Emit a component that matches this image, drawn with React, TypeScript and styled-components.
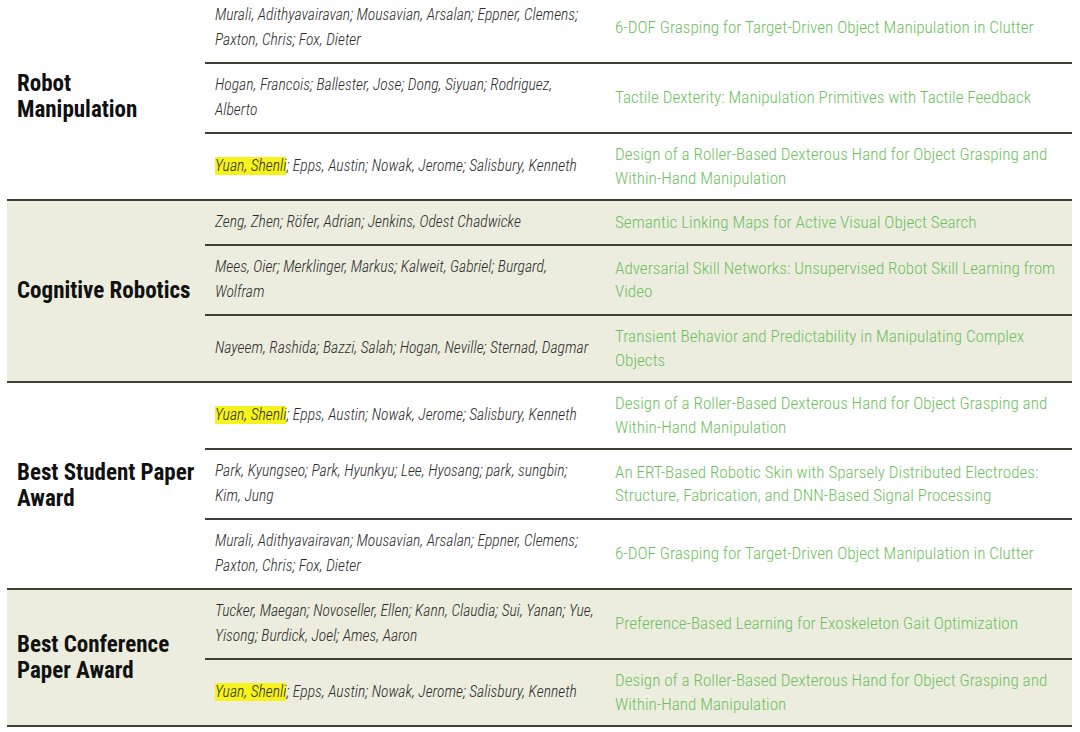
import React from "react";
import styled, { createGlobalStyle } from "styled-components";

const Global = createGlobalStyle`
  html, body { margin: 0; padding: 0; background: #ffffff; }
  body { font-family: "Roboto Condensed", Roboto, "Liberation Sans", sans-serif; overflow: hidden; }
`;

type Paper = { highlight?: string; authors: string; title: string };
type Group = { category: string[]; shaded: boolean; papers: Paper[] };

const yuan: Paper = {
  highlight: "Yuan, Shenli",
  authors: "; Epps, Austin; Nowak, Jerome; Salisbury, Kenneth",
  title: "Design of a Roller-Based Dexterous Hand for Object Grasping and Within-Hand Manipulation",
};
const murali: Paper = {
  authors: "Murali, Adithyavairavan; Mousavian, Arsalan; Eppner, Clemens;\nPaxton, Chris; Fox, Dieter",
  title: "6-DOF Grasping for Target-Driven Object Manipulation in Clutter",
};

const groups: Group[] = [
  {
    category: ["Robot", "Manipulation"],
    shaded: false,
    papers: [
      murali,
      {
        authors: "Hogan, Francois; Ballester, Jose; Dong, Siyuan; Rodriguez,\nAlberto",
        title: "Tactile Dexterity: Manipulation Primitives with Tactile Feedback",
      },
      yuan,
    ],
  },
  {
    category: ["Cognitive Robotics"],
    shaded: true,
    papers: [
      {
        authors: "Zeng, Zhen; Röfer, Adrian; Jenkins, Odest Chadwicke",
        title: "Semantic Linking Maps for Active Visual Object Search",
      },
      {
        authors: "Mees, Oier; Merklinger, Markus; Kalweit, Gabriel; Burgard,\nWolfram",
        title: "Adversarial Skill Networks: Unsupervised Robot Skill Learning from Video",
      },
      {
        authors: "Nayeem, Rashida; Bazzi, Salah; Hogan, Neville; Sternad, Dagmar",
        title: "Transient Behavior and Predictability in Manipulating Complex Objects",
      },
    ],
  },
  {
    category: ["Best Student Paper", "Award"],
    shaded: false,
    papers: [
      yuan,
      {
        authors: "Park, Kyungseo; Park, Hyunkyu; Lee, Hyosang; park, sungbin;\nKim, Jung",
        title:
          "An ERT-Based Robotic Skin with Sparsely Distributed Electrodes: Structure, Fabrication, and DNN-Based Signal Processing",
      },
      murali,
    ],
  },
  {
    category: ["Best Conference", "Paper Award"],
    shaded: true,
    papers: [
      {
        authors: "Tucker, Maegan; Novoseller, Ellen; Kann, Claudia; Sui, Yanan; Yue,\nYisong; Burdick, Joel; Ames, Aaron",
        title: "Preference-Based Learning for Exoskeleton Gait Optimization",
      },
      yuan,
    ],
  },
];

const Table = styled.div`
  margin: -6px 0 0 7px;
  width: 1065px;
`;

const GroupBlock = styled.section<{ $shaded: boolean }>`
  display: grid;
  grid-template-columns: 198px 400px 1fr;
  background: ${(p) => (p.$shaded ? "#ecedde" : "#ffffff")};
  border-bottom: 2px solid #3f3f38;
`;

const Category = styled.div<{ $rows: number }>`
  grid-row: 1 / span ${(p) => p.$rows};
  grid-column: 1;
  display: flex;
  align-items: center;
  padding: 0 10px;
  font-family: "Roboto Condensed", Roboto, "Liberation Sans", sans-serif;
  font-weight: 700;
  font-size: 23px;
  line-height: 26px;
  color: #111111;
`;

const Cell = styled.div<{ $first: boolean }>`
  display: flex;
  align-items: center;
  padding: 9px 10px;
  border-top: ${(p) => (p.$first ? "none" : "2px solid #3f3f38")};
`;

const Authors = styled(Cell)`
  grid-column: 2;
  padding-right: 4px;
  font-family: "Roboto Condensed", Roboto, "Liberation Sans", sans-serif;
  font-style: italic;
  font-weight: 300;
  font-size: 15.6px;
  line-height: 25px;
  color: #2b2b2b;
  white-space: pre-line;
`;

const Title = styled(Cell)`
  grid-column: 3;
  font-family: "Roboto Condensed", Roboto, "Liberation Sans", sans-serif;
  font-weight: 300;
  font-size: 17.1px;
  line-height: 23.5px;
  color: #6fbf62;
`;

const Mark = styled.span`
  background: #f6f21c;
`;

export default function App() {
  return (
    <>
      <Global />
      <Table>
        {groups.map((g, gi) => (
          <GroupBlock key={gi} $shaded={g.shaded}>
            <Category $rows={g.papers.length}>
              <div>
                {g.category.map((l, i) => (
                  <div key={i}>{l}</div>
                ))}
              </div>
            </Category>
            {g.papers.map((p, pi) => (
              <React.Fragment key={pi}>
                <Authors $first={pi === 0} style={{ gridRow: pi + 1 }}>
                  <span>
                    {p.highlight && <Mark>{p.highlight}</Mark>}
                    {p.authors}
                  </span>
                </Authors>
                <Title $first={pi === 0} style={{ gridRow: pi + 1 }}>
                  <span>{p.title}</span>
                </Title>
              </React.Fragment>
            ))}
          </GroupBlock>
        ))}
      </Table>
    </>
  );
}
